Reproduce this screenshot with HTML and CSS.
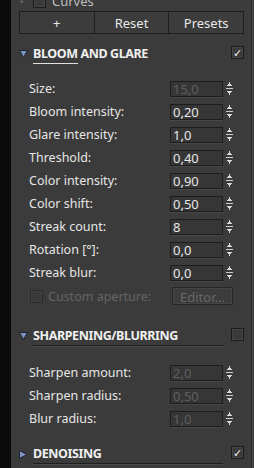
FILE: index.html
```html
<!DOCTYPE html>
<html lang="en">
<head>
    <meta charset="UTF-8">
    <title>Post-processing panel</title>
    <link rel="stylesheet" href="styles.css">
</head>
<body>
    <div class="frame">
        <div class="side"></div>
        <div class="panel">
            <!-- previous section, scrolled mostly out of view -->
            <div class="cut-row">
                <span class="cut-arrow">+</span>
                <span class="box"></span>
                <span class="cut-title">Curves</span>
            </div>

            <div class="button-group">
                <button>+</button>
                <button>Reset</button>
                <button>Presets</button>
            </div>

            <div class="section-head">
                <svg class="arrow" width="9" height="8" viewBox="0 0 9 8"><polygon points="0.5,0.5 8.5,0.5 4.5,7.5" /></svg>
                <div class="title"><span class="focus">BLOOM AND GLARE</span></div>
                <span class="box checked">&#10003;</span>
            </div>

            <div class="rows first">
                <div class="row"><label>Size:</label><span class="field disabled">15,0</span><span class="spin"></span></div>
                <div class="row"><label>Bloom intensity:</label><span class="field">0,20</span><span class="spin"></span></div>
                <div class="row"><label>Glare intensity:</label><span class="field">1,0</span><span class="spin"></span></div>
                <div class="row"><label>Threshold:</label><span class="field">0,40</span><span class="spin"></span></div>
                <div class="row"><label>Color intensity:</label><span class="field">0,90</span><span class="spin"></span></div>
                <div class="row"><label>Color shift:</label><span class="field">0,50</span><span class="spin"></span></div>
                <div class="row"><label>Streak count:</label><span class="field">8</span><span class="spin"></span></div>
                <div class="row"><label>Rotation [°]:</label><span class="field">0,0</span><span class="spin"></span></div>
                <div class="row"><label>Streak blur:</label><span class="field">0,0</span><span class="spin"></span></div>
                <div class="aperture">
                    <span class="box dim"></span>
                    <span class="dim-text">Custom aperture:</span>
                    <button class="editor">Editor...</button>
                </div>
            </div>

            <div class="section-head second-head">
                <svg class="arrow" width="9" height="8" viewBox="0 0 9 8"><polygon points="0.5,0.5 8.5,0.5 4.5,7.5" /></svg>
                <div class="title lined">SHARPENING/BLURRING</div>
                <span class="box"></span>
            </div>

            <div class="rows second">
                <div class="row"><label>Sharpen amount:</label><span class="field disabled">2,0</span><span class="spin"></span></div>
                <div class="row"><label>Sharpen radius:</label><span class="field disabled">0,50</span><span class="spin"></span></div>
                <div class="row"><label>Blur radius:</label><span class="field disabled">1,0</span><span class="spin"></span></div>
            </div>

            <div class="section-head last">
                <svg class="arrow" width="9" height="9" viewBox="0 0 9 9"><polygon points="0.5,0.5 8,4.5 0.5,8.5" /></svg>
                <div class="title lined">DENOISING</div>
                <span class="box checked">&#10003;</span>
            </div>
        </div>
        <div class="scroll"></div>
    </div>
</body>
</html>
```

FILE: styles.css
```css
body {
    margin: 0;
    background-color: #000;
    font-family: "Noto Sans", "Open Sans", sans-serif;
    font-size: 12.5px;
    color: #e6e6e6;
    overflow: hidden;
}

.frame {
    display: flex;
    height: 468px;
    overflow: hidden;
}

.side {
    width: 11px;
    background-color: #0b0b0b;
}

.panel {
    width: 225px;
    padding: 0 7px 0 8px;
    background-color: #3b3b3b;
    border-right: 1px solid #2b2b2b;
    overflow: hidden;
}

.scroll {
    flex: 1;
    background-color: #3d3d3d;
    border-left: 1px solid #464646;
}

.box {
    width: 11px;
    height: 11px;
    border: 1px solid #1c1c1c;
    background-color: #3a3a3a;
    box-shadow: inset 0 0 0 1px #444;
    flex-shrink: 0;
    display: flex;
    align-items: center;
    justify-content: center;
    font-size: 11px;
    line-height: 1;
    color: #f2f2f2;
}

.cut-row {
    display: flex;
    align-items: center;
    gap: 6px;
    height: 14px;
    margin-top: -6px;
    color: #bdbdbd;
}

.cut-arrow {
    width: 8px;
    font-size: 9px;
    color: #777;
}

.cut-title {
    font-size: 13px;
}

.button-group {
    display: flex;
    margin-top: 3px;
    height: 23px;
}

.button-group button {
    flex: 1;
    border: 1px solid #1e1e1e;
    background-color: #3c3c3c;
    color: #e8e8e8;
    font-family: inherit;
    font-size: 13px;
    padding: 0;
}

.button-group button + button {
    border-left: none;
}

.section-head {
    display: flex;
    align-items: center;
    height: 21px;
    margin-top: 9px;
}

.arrow {
    fill: #7f93c2;
    stroke: #1d2130;
    stroke-width: 1;
    margin: 1px 5px 0 0;
    flex-shrink: 0;
}

.title {
    flex: 1;
    align-self: stretch;
    display: flex;
    align-items: center;
    font-weight: bold;
    font-size: 12.5px;
    letter-spacing: -0.4px;
    color: #f0f0f0;
    position: relative;
}

.focus::after {
    content: "";
    position: absolute;
    left: 0;
    bottom: 0;
    width: 45px;
    height: 1px;
    background-color: #e0e0e0;
}

.title.lined {
    border-bottom: 1px solid #1f1f1f;
    box-shadow: 0 1px 0 #4a4a4a;
}

.section-head .box {
    margin-left: 8px;
    margin-top: -2px;
}

.rows.first {
    margin-top: 13px;
}

.rows.second {
    margin-top: 15px;
}

.row {
    display: flex;
    align-items: center;
    height: 23px;
    padding: 0 11px 0 10px;
}

.row label {
    flex: 1;
}

.field {
    width: 49px;
    height: 14px;
    border: 1px solid #1d1d1d;
    background-color: #363636;
    box-shadow: 0 1px 0 #474747;
    padding-left: 2px;
    line-height: 14px;
    font-size: 13px;
}

.field.disabled {
    color: #5f5f5f;
}

.spin {
    width: 7px;
    height: 15px;
    margin-left: 3px;
    background:
        linear-gradient(#cfcfcf, #cfcfcf) 0 7px / 7px 1px no-repeat,
        conic-gradient(from 150deg at 50% 0, #d8d8d8 60deg, transparent 0) 0 1px / 7px 4px no-repeat,
        conic-gradient(from -30deg at 50% 100%, #d8d8d8 60deg, transparent 0) 0 10px / 7px 4px no-repeat;
}

.aperture {
    display: flex;
    align-items: center;
    height: 24px;
    padding: 0 11px 0 11px;
}

.box.dim {
    border-color: #2a2a2a;
    box-shadow: inset 0 0 0 1px #414141;
}

.dim-text {
    flex: 1;
    margin-left: 5px;
    color: #656565;
}

.editor {
    width: 61px;
    height: 18px;
    border: 1px solid #262626;
    background-color: #3c3c3c;
    box-shadow: inset 0 0 0 1px #444;
    color: #676767;
    font-family: inherit;
    font-size: 13px;
    padding: 0;
}

.section-head.second-head {
    margin-top: 17px;
}

.section-head.last {
    margin-top: 13px;
}
```
